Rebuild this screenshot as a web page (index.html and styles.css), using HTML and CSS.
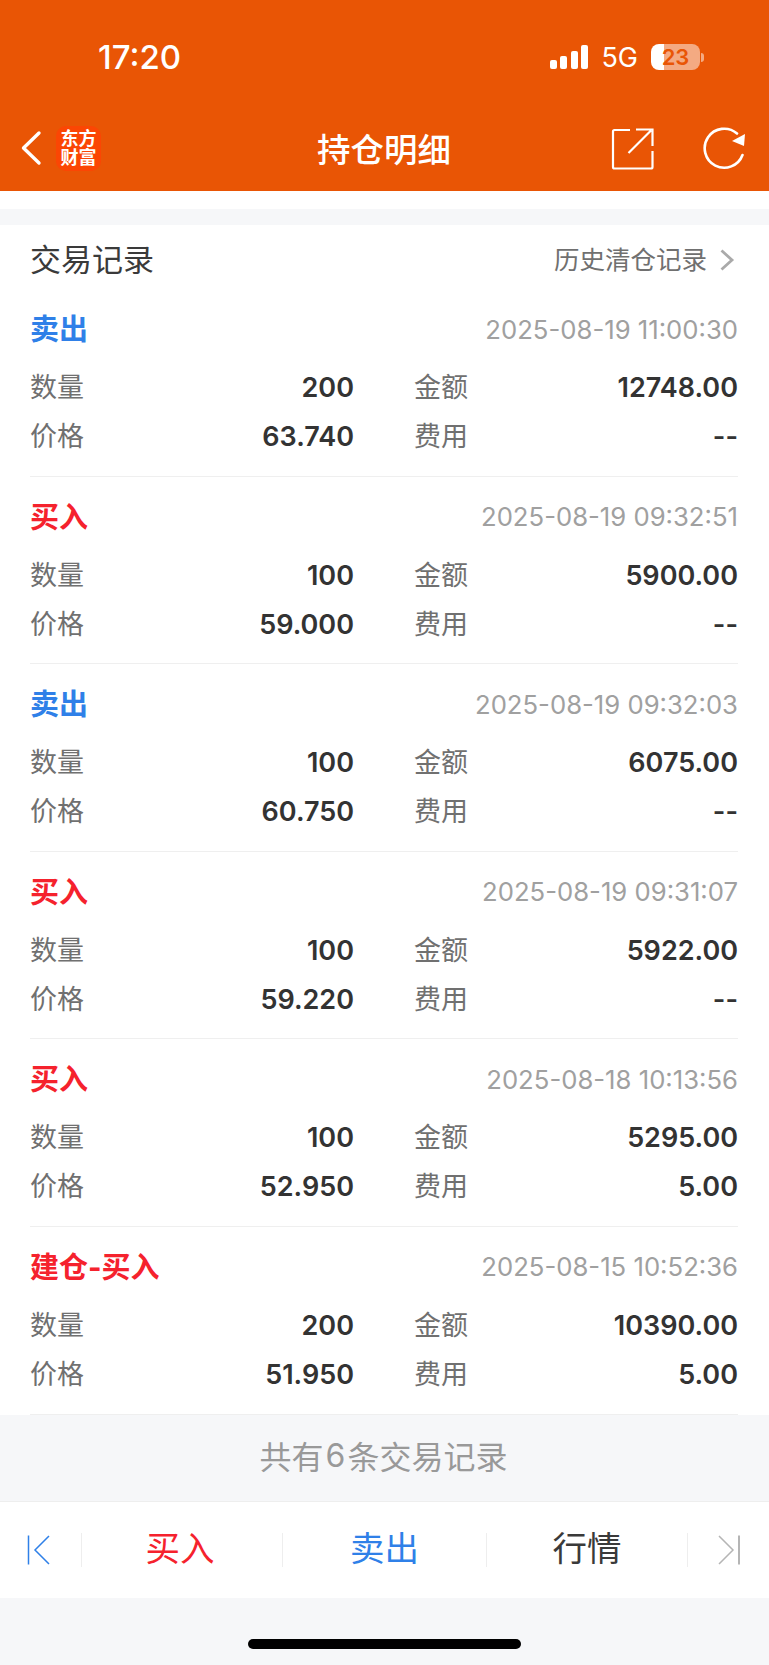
FILE: index.html
```html
<!DOCTYPE html>
<html lang="en">

<head>
    <meta charset="UTF-8">
    <meta name="viewport" content="width=device-width, initial-scale=1.0">
    <title>持仓明细</title>
    <link rel="stylesheet" href="styles.css">
</head>

<body>
    <div class="app">
        <header class="header">
            <div class="status">
                <span class="time">17:20</span>
                <div class="status-right">
                    <div class="signal">
                        <i class="bar1"></i><i class="bar2"></i><i class="bar3"></i><i class="bar4"></i>
                    </div>
                    <span class="net">5G</span>
                    <div class="battery"><span class="battery-num">23</span></div>
                    <i class="battery-tip"></i>
                </div>
            </div>
            <div class="nav">
                <div class="nav-left">
                    <svg class="back" width="22" height="36" viewBox="0 0 22 36">
                        <path d="M19 3 L3.5 18 L19 33" fill="none" stroke="#fff" stroke-width="3.4" stroke-linecap="round" stroke-linejoin="round" />
                    </svg>
                    <div class="logo">东方<br>财富</div>
                </div>
                <div class="nav-title">持仓明细</div>
                <div class="nav-right">
                    <svg width="44" height="44" viewBox="0 0 44 44">
                        <path d="M20 4 H4.5 Q3 4 3 5.500 V41 Q3 42.500 4.500 42.500 H41 Q42.500 42.500 42.500 41 V25" fill="none" stroke="#fff" stroke-width="2.200" />
                        <path d="M18.500 27 L41 4.500 M26 3.500 H42.500 V20" fill="none" stroke="#fff" stroke-width="2.200" />
                    </svg>
                    <svg width="44" height="44" viewBox="0 0 44 44">
                        <path d="M39.500 29 A19.500 19.500 0 1 1 34 7.500" fill="none" stroke="#fff" stroke-width="2.600" stroke-linecap="round" />
                        <path d="M42 8 L41 20 L29 15 Z" fill="#fff" />
                    </svg>
                </div>
            </div>
        </header>

        <div class="gap-white"></div>
        <div class="gap-gray"></div>

        <main class="card">
            <div class="card-head">
                <span class="card-title">交易记录</span>
                <span class="history">历史清仓记录
                    <svg class="history-arrow" width="16" height="24" viewBox="0 0 16 24">
                        <path d="M2.500 2.500 L13 12 L2.500 21.500" fill="none" stroke="#aaa" stroke-width="2.800" />
                    </svg>
                </span>
            </div>

            <section class="record">
                <div class="record-head">
                    <span class="type sell">卖出</span>
                    <span class="date">2025-08-19 11:00:30</span>
                </div>
                <div class="fields">
                    <div class="field"><span class="label">数量</span><span class="value">200</span></div>
                    <div class="field"><span class="label">金额</span><span class="value">12748.00</span></div>
                    <div class="field"><span class="label">价格</span><span class="value">63.740</span></div>
                    <div class="field"><span class="label">费用</span><span class="value">--</span></div>
                </div>
            </section>

            <section class="record">
                <div class="record-head">
                    <span class="type buy">买入</span>
                    <span class="date">2025-08-19 09:32:51</span>
                </div>
                <div class="fields">
                    <div class="field"><span class="label">数量</span><span class="value">100</span></div>
                    <div class="field"><span class="label">金额</span><span class="value">5900.00</span></div>
                    <div class="field"><span class="label">价格</span><span class="value">59.000</span></div>
                    <div class="field"><span class="label">费用</span><span class="value">--</span></div>
                </div>
            </section>

            <section class="record">
                <div class="record-head">
                    <span class="type sell">卖出</span>
                    <span class="date">2025-08-19 09:32:03</span>
                </div>
                <div class="fields">
                    <div class="field"><span class="label">数量</span><span class="value">100</span></div>
                    <div class="field"><span class="label">金额</span><span class="value">6075.00</span></div>
                    <div class="field"><span class="label">价格</span><span class="value">60.750</span></div>
                    <div class="field"><span class="label">费用</span><span class="value">--</span></div>
                </div>
            </section>

            <section class="record">
                <div class="record-head">
                    <span class="type buy">买入</span>
                    <span class="date">2025-08-19 09:31:07</span>
                </div>
                <div class="fields">
                    <div class="field"><span class="label">数量</span><span class="value">100</span></div>
                    <div class="field"><span class="label">金额</span><span class="value">5922.00</span></div>
                    <div class="field"><span class="label">价格</span><span class="value">59.220</span></div>
                    <div class="field"><span class="label">费用</span><span class="value">--</span></div>
                </div>
            </section>

            <section class="record">
                <div class="record-head">
                    <span class="type buy">买入</span>
                    <span class="date">2025-08-18 10:13:56</span>
                </div>
                <div class="fields">
                    <div class="field"><span class="label">数量</span><span class="value">100</span></div>
                    <div class="field"><span class="label">金额</span><span class="value">5295.00</span></div>
                    <div class="field"><span class="label">价格</span><span class="value">52.950</span></div>
                    <div class="field"><span class="label">费用</span><span class="value">5.00</span></div>
                </div>
            </section>

            <section class="record">
                <div class="record-head">
                    <span class="type buy">建仓-买入</span>
                    <span class="date">2025-08-15 10:52:36</span>
                </div>
                <div class="fields">
                    <div class="field"><span class="label">数量</span><span class="value">200</span></div>
                    <div class="field"><span class="label">金额</span><span class="value">10390.00</span></div>
                    <div class="field"><span class="label">价格</span><span class="value">51.950</span></div>
                    <div class="field"><span class="label">费用</span><span class="value">5.00</span></div>
                </div>
            </section>
        </main>

        <div class="total">共有<span class="total-num">6</span>条交易记录</div>

        <nav class="toolbar">
            <div class="tool tool-edge">
                <svg class="first-icon" width="24" height="30" viewBox="0 0 24 30">
                    <path d="M1.500 0.500 V29.500 M22 1 L8 15 L22 29" fill="none" stroke="#2f80e8" stroke-width="1.500" />
                </svg>
            </div>
            <div class="tool tool-text tool-buy buy">买入</div>
            <div class="tool tool-text sell">卖出</div>
            <div class="tool tool-text quote">行情</div>
            <div class="tool tool-edge">
                <svg width="24" height="30" viewBox="0 0 24 30">
                    <path d="M2 1 L16 15 L2 29" fill="none" stroke="#b5b5b5" stroke-width="1.500" />
                    <path d="M22 0.500 V29.500" fill="none" stroke="#b5b5b5" stroke-width="2" />
                </svg>
            </div>
        </nav>

        <div class="home-area">
            <div class="home-bar"></div>
        </div>
    </div>
</body>

</html>
```

FILE: styles.css
```css
* {
    box-sizing: border-box;
}

body {
    margin: 0;
    background-color: #f6f7f9;
    font-family: Inter, "Noto Sans CJK SC", sans-serif;
}

.app {
    display: flex;
    flex-direction: column;
    height: 1665px;
    overflow: hidden;
}

.header {
    height: 191px;
    padding-top: 1px;
    background-color: #e95505;
    color: #fff;
}

.status {
    display: flex;
    justify-content: space-between;
    align-items: center;
    height: 58px;
    margin-top: 27px;
    padding: 0 65px 0 98px;
}

.time {
    font-size: 33px;
    font-weight: 500;
}

.status-right {
    display: flex;
    align-items: center;
}

.signal {
    display: flex;
    align-items: flex-end;
    gap: 3.5px;
    height: 24px;
    margin-right: 13px;
}

.signal i {
    width: 7px;
    border-radius: 2px;
    background-color: #fff;
}

.bar1 {
    height: 9px;
}

.bar2 {
    height: 13px;
}

.bar3 {
    height: 18px;
}

.bar4 {
    height: 24px;
}

.net {
    font-size: 27px;
    margin-right: 13px;
}

.battery {
    display: flex;
    justify-content: center;
    align-items: center;
    width: 49px;
    height: 26px;
    border-radius: 8px;
    background: linear-gradient(to right, #fff 0, #fff 13px, rgba(255, 255, 255, 0.5) 13px);
}

.battery-num {
    font-size: 22px;
    font-weight: 600;
    color: #e95505;
}

.battery-tip {
    width: 3px;
    height: 9px;
    margin-left: 1px;
    border-radius: 0 3px 3px 0;
    background-color: rgba(255, 255, 255, 0.5);
}

.nav {
    display: flex;
    justify-content: space-between;
    align-items: center;
    height: 64px;
    margin-top: 30px;
    padding: 0 22px 0 20px;
    position: relative;
}

.nav-left,
.nav-right {
    display: flex;
    align-items: center;
}

.nav-left {
    gap: 14px;
}

.nav-right {
    gap: 49px;
}

.logo {
    width: 45px;
    height: 45px;
    padding-top: 3px;
    border-radius: 10px;
    background-color: #fb4604;
    color: #fff;
    font-size: 18px;
    font-weight: 700;
    line-height: 19px;
    text-align: center;
}

.nav-title {
    font-size: 33.5px;
    font-weight: 500;
    position: absolute;
    left: 317px;
    padding-bottom: 2px;
}

.gap-white {
    height: 18px;
    background-color: #fff;
}

.gap-gray {
    height: 16px;
}

.card {
    height: 1190px;
    padding: 0 31px 0 30px;
    background-color: #fff;
}

.card-head {
    display: flex;
    justify-content: space-between;
    align-items: center;
    height: 64px;
}

.card-title {
    font-size: 31px;
    color: #3a3a3a;
}

.history {
    display: flex;
    align-items: center;
    gap: 12px;
    padding-right: 3px;
    font-size: 25.500px;
    color: #707070;
}

.history-arrow {
    margin-top: 6px;
}

.record {
    height: 187.6px;
    padding-top: 18px;
    border-bottom: 1px solid #efefef;
}

.record-head {
    display: flex;
    justify-content: space-between;
    align-items: center;
    height: 44px;
    margin-bottom: 12px;
}

.type {
    padding-bottom: 4px;
    font-size: 29px;
    font-weight: 700;
}

.buy {
    color: #f5222d;
}

.sell {
    color: #2f80e8;
}

.date {
    font-size: 25.700px;
    color: #a0a0a0;
}

.fields {
    display: grid;
    grid-template-columns: 324px 324px;
    column-gap: 60px;
    grid-auto-rows: 49px;
}

.field {
    display: flex;
    justify-content: space-between;
    align-items: center;
}

.label {
    padding-bottom: 4px;
    font-size: 27px;
    color: #707070;
}

.value {
    font-size: 27px;
    font-weight: 600;
    color: #333;
}

.total {
    display: flex;
    justify-content: center;
    align-items: center;
    height: 86px;
    padding: 0 2px 6px 0;
    font-size: 32px;
    color: #999;
}

.total-num {
    margin: 0 2px;
}

.toolbar {
    display: grid;
    grid-template-columns: 82px 201px 204px 201px 81px;
    align-items: center;
    height: 97px;
    border-top: 1px solid #eeeeee;
    background-color: #fff;
}

.tool {
    display: flex;
    justify-content: center;
    align-items: center;
    height: 34px;
    font-size: 34.500px;
    border-right: 1px solid #eeeeee;
}

.tool-text {
    padding-bottom: 8px;
}

.tool-buy {
    padding-right: 4px;
}

.tool:last-child {
    border-right: none;
}

.tool-edge svg {
    flex: none;
}

.first-icon {
    margin-right: 3px;
}

.quote {
    color: #3a3a3a;
}

.home-area {
    flex: 1;
    padding-top: 41px;
}

.home-bar {
    width: 273px;
    height: 10px;
    margin-left: 248px;
    border-radius: 5px;
    background-color: #000;
}
```
